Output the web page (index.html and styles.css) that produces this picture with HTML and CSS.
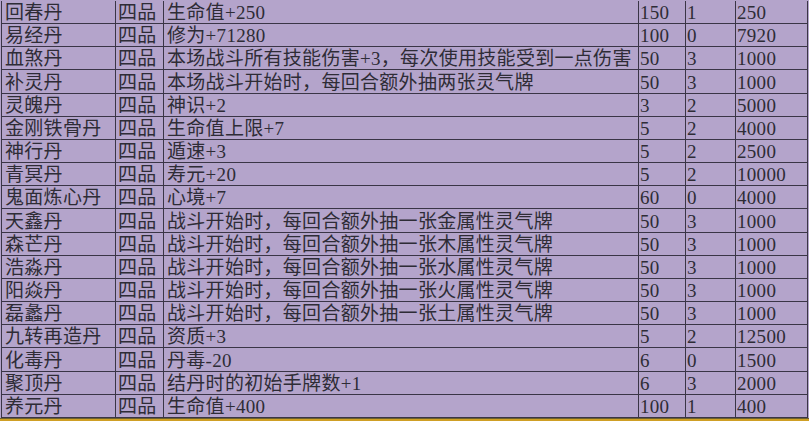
FILE: index.html
```html
<!DOCTYPE html>
<html lang="zh-CN">
<head>
<meta charset="utf-8">
<title>丹药表</title>
<link rel="stylesheet" href="styles.css">
</head>
<body>
<div class="sheet">
  <div class="row"><div class="c">回春丹</div><div class="c">四品</div><div class="c">生命值+250</div><div class="c">150</div><div class="c">1</div><div class="c">250</div></div>
  <div class="row"><div class="c">易经丹</div><div class="c">四品</div><div class="c">修为+71280</div><div class="c">100</div><div class="c">0</div><div class="c">7920</div></div>
  <div class="row"><div class="c">血煞丹</div><div class="c">四品</div><div class="c">本场战斗所有技能伤害+3，每次使用技能受到一点伤害</div><div class="c">50</div><div class="c">3</div><div class="c">1000</div></div>
  <div class="row"><div class="c">补灵丹</div><div class="c">四品</div><div class="c">本场战斗开始时，每回合额外抽两张灵气牌</div><div class="c">50</div><div class="c">3</div><div class="c">1000</div></div>
  <div class="row"><div class="c">灵魄丹</div><div class="c">四品</div><div class="c">神识+2</div><div class="c">3</div><div class="c">2</div><div class="c">5000</div></div>
  <div class="row"><div class="c">金刚铁骨丹</div><div class="c">四品</div><div class="c">生命值上限+7</div><div class="c">5</div><div class="c">2</div><div class="c">4000</div></div>
  <div class="row"><div class="c">神行丹</div><div class="c">四品</div><div class="c">遁速+3</div><div class="c">5</div><div class="c">2</div><div class="c">2500</div></div>
  <div class="row"><div class="c">青冥丹</div><div class="c">四品</div><div class="c">寿元+20</div><div class="c">5</div><div class="c">2</div><div class="c">10000</div></div>
  <div class="row"><div class="c">鬼面炼心丹</div><div class="c">四品</div><div class="c">心境+7</div><div class="c">60</div><div class="c">0</div><div class="c">4000</div></div>
  <div class="row"><div class="c">天鑫丹</div><div class="c">四品</div><div class="c">战斗开始时，每回合额外抽一张金属性灵气牌</div><div class="c">50</div><div class="c">3</div><div class="c">1000</div></div>
  <div class="row"><div class="c">森芒丹</div><div class="c">四品</div><div class="c">战斗开始时，每回合额外抽一张木属性灵气牌</div><div class="c">50</div><div class="c">3</div><div class="c">1000</div></div>
  <div class="row"><div class="c">浩淼丹</div><div class="c">四品</div><div class="c">战斗开始时，每回合额外抽一张水属性灵气牌</div><div class="c">50</div><div class="c">3</div><div class="c">1000</div></div>
  <div class="row"><div class="c">阳焱丹</div><div class="c">四品</div><div class="c">战斗开始时，每回合额外抽一张火属性灵气牌</div><div class="c">50</div><div class="c">3</div><div class="c">1000</div></div>
  <div class="row"><div class="c">磊蠡丹</div><div class="c">四品</div><div class="c">战斗开始时，每回合额外抽一张土属性灵气牌</div><div class="c">50</div><div class="c">3</div><div class="c">1000</div></div>
  <div class="row"><div class="c">九转再造丹</div><div class="c">四品</div><div class="c">资质+3</div><div class="c">5</div><div class="c">2</div><div class="c">12500</div></div>
  <div class="row"><div class="c">化毒丹</div><div class="c">四品</div><div class="c">丹毒-20</div><div class="c">6</div><div class="c">0</div><div class="c">1500</div></div>
  <div class="row"><div class="c">聚顶丹</div><div class="c">四品</div><div class="c">结丹时的初始手牌数+1</div><div class="c">6</div><div class="c">3</div><div class="c">2000</div></div>
  <div class="row"><div class="c">养元丹</div><div class="c">四品</div><div class="c">生命值+400</div><div class="c">100</div><div class="c">1</div><div class="c">400</div></div>
</div>
<div class="edge"></div>
</body>
</html>
```
FILE: styles.css
```css
html, body {
  margin: 0;
  padding: 0;
  background: #b4a4cb;
  overflow: hidden;
}
.sheet {
  margin: 1px 0 0 1px;
  width: 807px;
  height: 417px;
  box-sizing: border-box;
  border-left: 1px solid #3a3546;
  display: grid;
  grid-template-columns: 114px 48px 475px 47px 50px 72px;
  grid-template-rows: repeat(18, 1fr);
  font-family: "Liberation Serif", "Noto Sans CJK SC", serif;
  font-size: 19px;
  letter-spacing: 0.3px;
  color: #2e2c36;
}
.row {
  display: contents;
}
.c {
  box-sizing: border-box;
  border-right: 1px solid #3a3546;
  border-bottom: 1px solid #3a3546;
  display: flex;
  align-items: center;
  padding: 1px 0 0 3px;
  white-space: nowrap;
  overflow: hidden;
  line-height: 1;
}
.row .c:nth-child(2) {
  padding-left: 2px;
}
.row .c:nth-child(4),
.row .c:nth-child(5),
.row .c:nth-child(6) {
  padding-left: 1px;
}
.edge {
  height: 3px;
  background: #cf9f24;
  border-top: 1px solid #6b6030;
}
```
